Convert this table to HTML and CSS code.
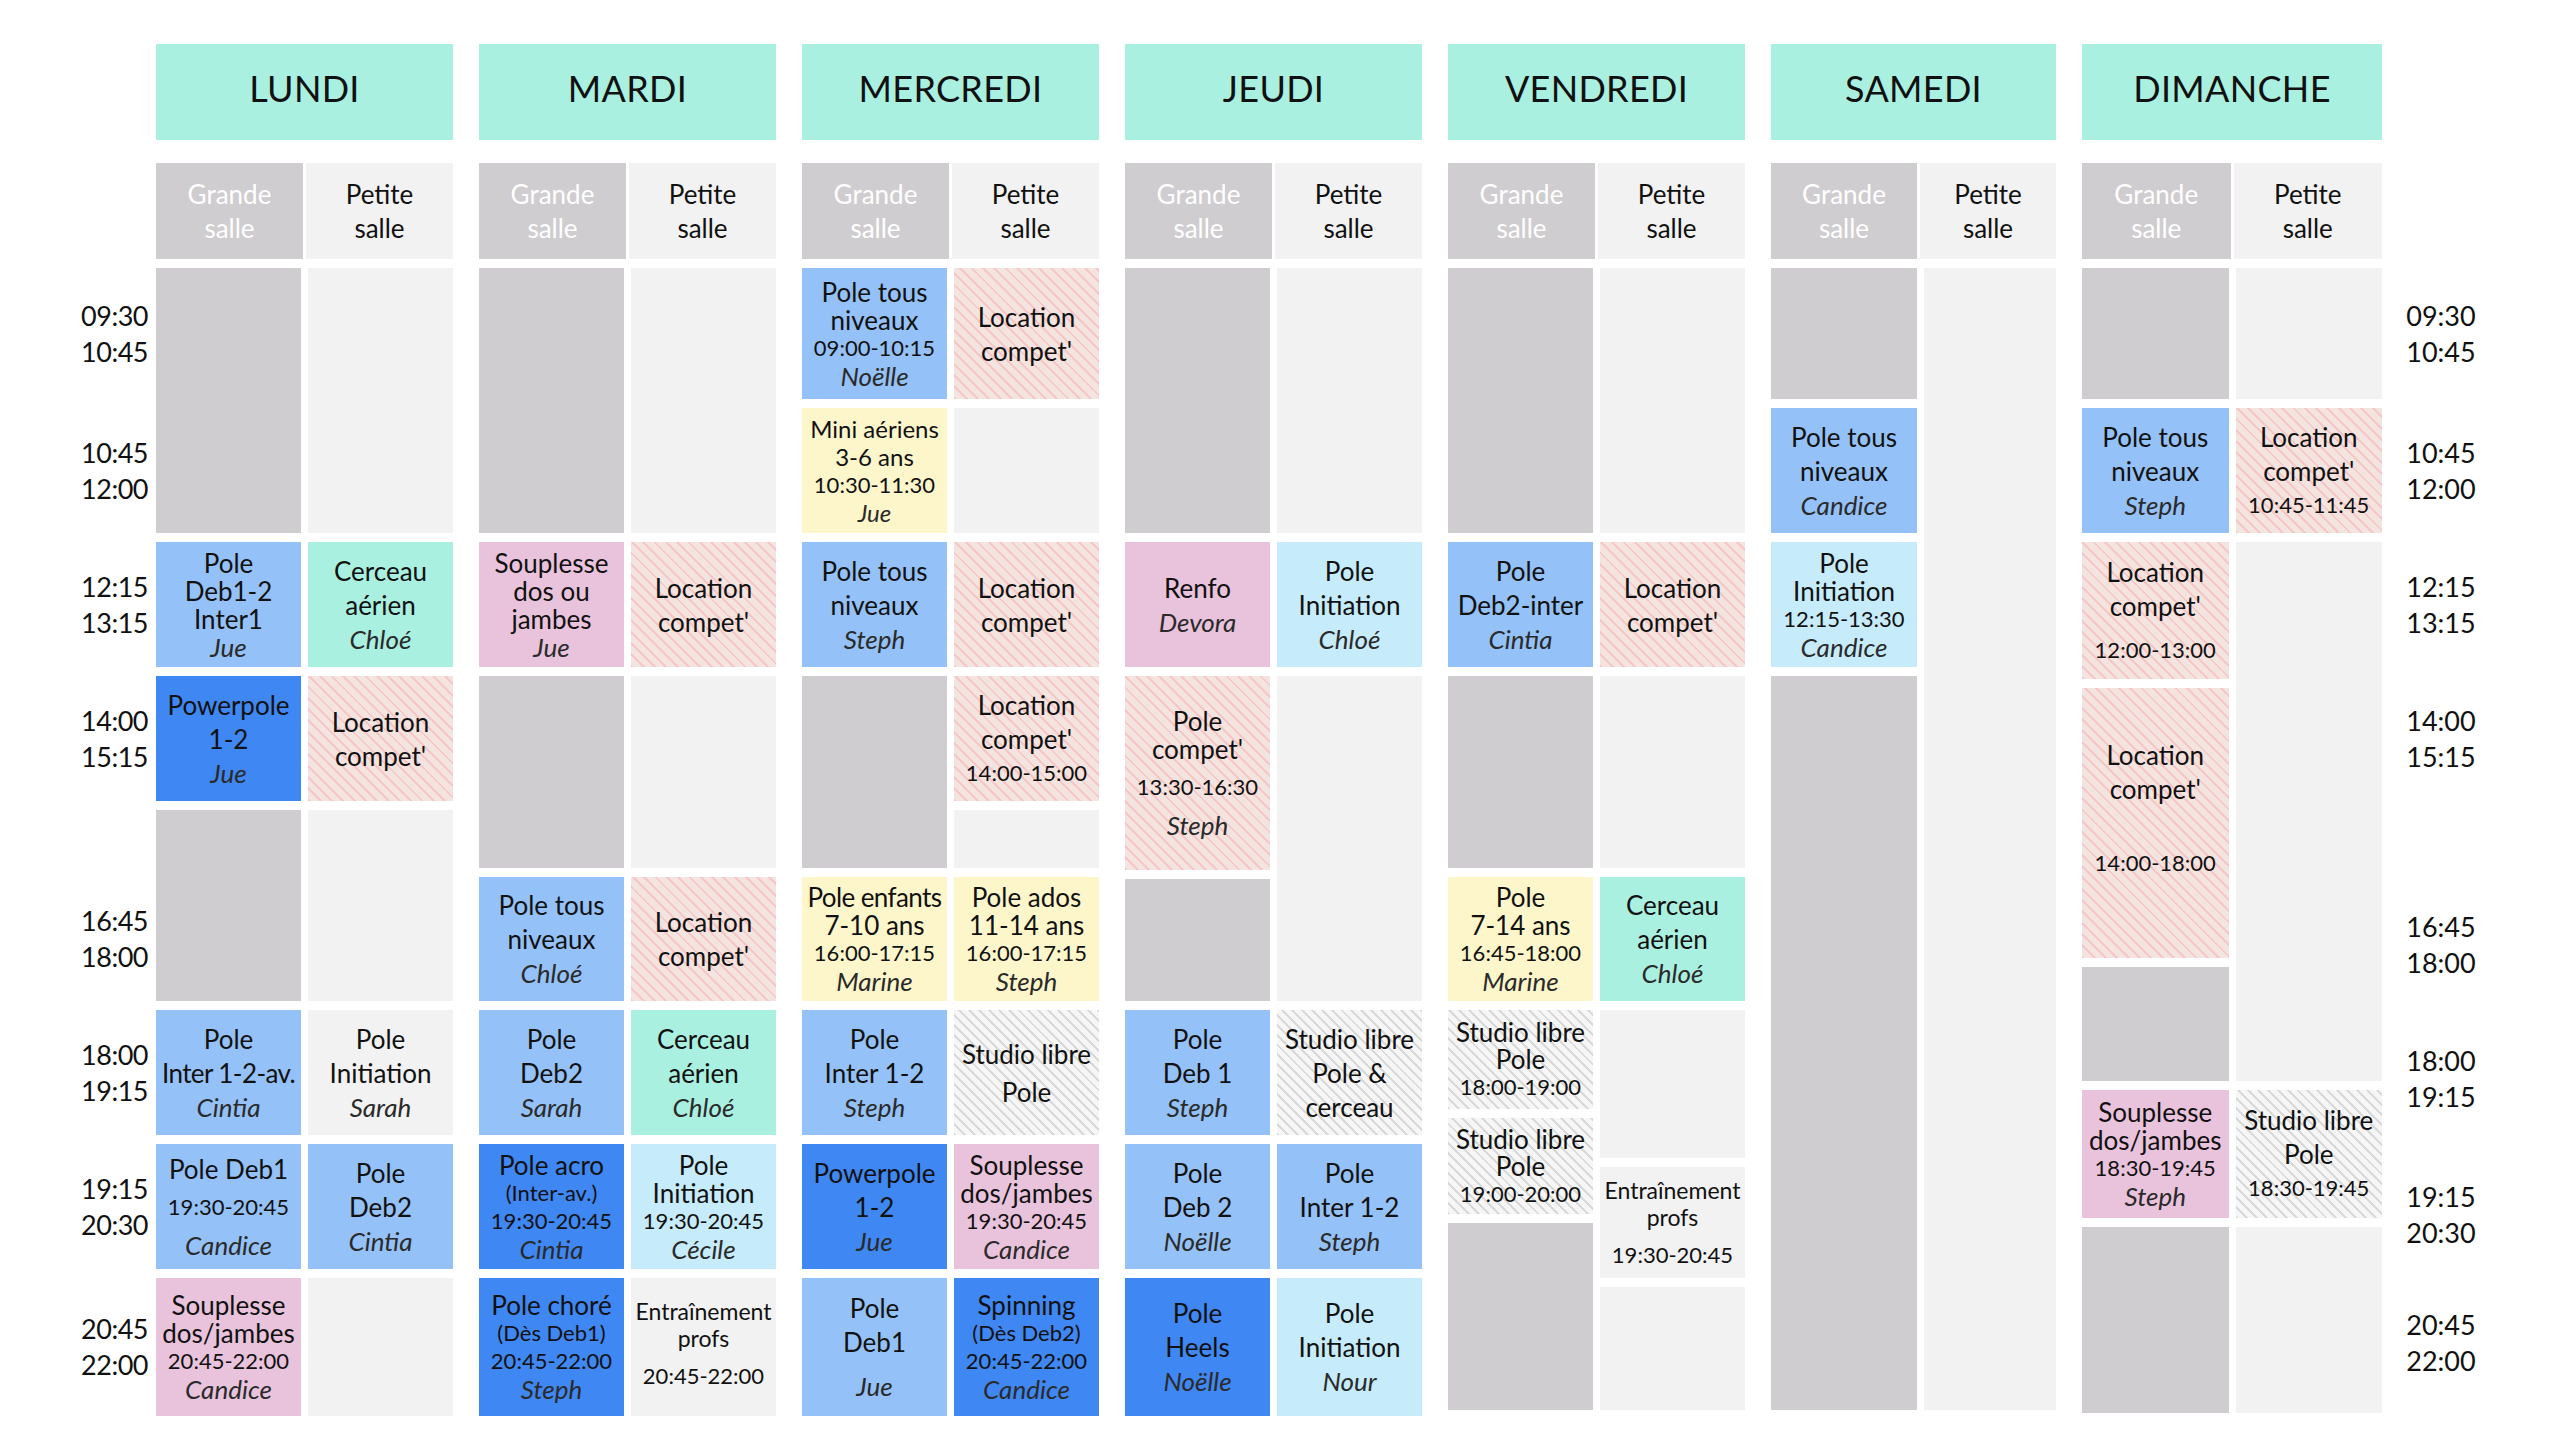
FILE: index.html
```html
<!DOCTYPE html>
<html lang="fr">
<head>
<meta charset="utf-8">
<title>Planning</title>
<link rel="stylesheet" href="styles.css">
</head>
<body>
<div class="page">
  <div class="times left">
    <div class="slot hA"><span>09:30</span><span>10:45</span></div>
    <div class="slot hB"><span>10:45</span><span>12:00</span></div>
    <div class="slot hC"><span>12:15</span><span>13:15</span></div>
    <div class="slot hD"><span>14:00</span><span>15:15</span></div>
    <div class="slot hE"></div>
    <div class="slot hF"><span>16:45</span><span>18:00</span></div>
    <div class="slot hG"><span>18:00</span><span>19:15</span></div>
    <div class="slot hH"><span>19:15</span><span>20:30</span></div>
    <div class="slot hI"><span>20:45</span><span>22:00</span></div>
  </div>

  <div class="days">
    <!-- LUNDI -->
    <div class="day">
      <div class="dayhead">LUNDI</div>
      <div class="rooms"><div class="room big">Grande<br>salle</div><div class="room small">Petite<br>salle</div></div>
      <div class="cols">
        <div class="col">
          <div class="b gy h265"></div>
          <div class="b lb hC tight"><span>Pole</span><span>Deb1-2</span><span>Inter1</span><span class="n">Jue</span></div>
          <div class="b db hD"><span>Powerpole</span><span>1-2</span><span class="n">Jue</span></div>
          <div class="b gy h191"></div>
          <div class="b lb hG"><span>Pole</span><span class="nar">Inter 1-2-av.</span><span class="n">Cintia</span></div>
          <div class="b lb hH loose"><span>Pole Deb1</span><span class="t">19:30-20:45</span><span class="n">Candice</span></div>
          <div class="b pk hI tight"><span>Souplesse</span><span>dos/jambes</span><span class="t">20:45-22:00</span><span class="n">Candice</span></div>
        </div>
        <div class="col">
          <div class="b lg h265"></div>
          <div class="b mt hC"><span>Cerceau</span><span>aérien</span><span class="n">Chloé</span></div>
          <div class="b hp hD"><span>Location</span><span>compet'</span></div>
          <div class="b lg h191"></div>
          <div class="b lg hG"><span>Pole</span><span>Initiation</span><span class="n">Sarah</span></div>
          <div class="b lb hH"><span>Pole</span><span>Deb2</span><span class="n">Cintia</span></div>
          <div class="b lg hI"></div>
        </div>
      </div>
    </div>

    <!-- MARDI -->
    <div class="day">
      <div class="dayhead">MARDI</div>
      <div class="rooms"><div class="room big">Grande<br>salle</div><div class="room small">Petite<br>salle</div></div>
      <div class="cols">
        <div class="col">
          <div class="b gy h265"></div>
          <div class="b pk hC tight"><span>Souplesse</span><span>dos ou</span><span>jambes</span><span class="n">Jue</span></div>
          <div class="b gy h192"></div>
          <div class="b lb hF"><span>Pole tous</span><span>niveaux</span><span class="n">Chloé</span></div>
          <div class="b lb hG"><span>Pole</span><span>Deb2</span><span class="n">Sarah</span></div>
          <div class="b db hH tight"><span>Pole acro</span><span class="s">(Inter-av.)</span><span class="t">19:30-20:45</span><span class="n">Cintia</span></div>
          <div class="b db hI tight"><span>Pole choré</span><span class="s">(Dès Deb1)</span><span class="t">20:45-22:00</span><span class="n">Steph</span></div>
        </div>
        <div class="col">
          <div class="b lg h265"></div>
          <div class="b hp hC"><span>Location</span><span>compet'</span></div>
          <div class="b lg h192"></div>
          <div class="b hp hF"><span>Location</span><span>compet'</span></div>
          <div class="b mt hG"><span>Cerceau</span><span>aérien</span><span class="n">Chloé</span></div>
          <div class="b cy hH tight"><span>Pole</span><span>Initiation</span><span class="t">19:30-20:45</span><span class="n">Cécile</span></div>
          <div class="b lg hI sm lift2"><span>Entraînement</span><span>profs</span><span class="t gap">20:45-22:00</span></div>
        </div>
      </div>
    </div>

    <!-- MERCREDI -->
    <div class="day">
      <div class="dayhead">MERCREDI</div>
      <div class="rooms"><div class="room big">Grande<br>salle</div><div class="room small">Petite<br>salle</div></div>
      <div class="cols">
        <div class="col">
          <div class="b lb hA tight"><span>Pole tous</span><span>niveaux</span><span class="t">09:00-10:15</span><span class="n">Noëlle</span></div>
          <div class="b yw hB tight md"><span>Mini aériens</span><span>3-6 ans</span><span class="t">10:30-11:30</span><span class="n">Jue</span></div>
          <div class="b lb hC"><span>Pole tous</span><span>niveaux</span><span class="n">Steph</span></div>
          <div class="b gy h192"></div>
          <div class="b yw hF tight"><span class="nar">Pole enfants</span><span>7-10 ans</span><span class="t">16:00-17:15</span><span class="n">Marine</span></div>
          <div class="b lb hG"><span>Pole</span><span>Inter 1-2</span><span class="n">Steph</span></div>
          <div class="b db hH"><span>Powerpole</span><span>1-2</span><span class="n">Jue</span></div>
          <div class="b lb hI"><span>Pole</span><span>Deb1</span><span class="n gap">Jue</span></div>
        </div>
        <div class="col">
          <div class="b hp hA"><span>Location</span><span>compet'</span></div>
          <div class="b lg hB"></div>
          <div class="b hp hC"><span>Location</span><span>compet'</span></div>
          <div class="b hp hD"><span>Location</span><span>compet'</span><span class="t">14:00-15:00</span></div>
          <div class="b lg hE"></div>
          <div class="b yw hF tight"><span>Pole ados</span><span>11-14 ans</span><span class="t">16:00-17:15</span><span class="n">Steph</span></div>
          <div class="b hg hG loose"><span>Studio libre</span><span>Pole</span></div>
          <div class="b pk hH tight"><span>Souplesse</span><span>dos/jambes</span><span class="t">19:30-20:45</span><span class="n">Candice</span></div>
          <div class="b db hI tight"><span>Spinning</span><span class="s">(Dès Deb2)</span><span class="t">20:45-22:00</span><span class="n">Candice</span></div>
        </div>
      </div>
    </div>

    <!-- JEUDI -->
    <div class="day">
      <div class="dayhead">JEUDI</div>
      <div class="rooms"><div class="room big">Grande<br>salle</div><div class="room small">Petite<br>salle</div></div>
      <div class="cols">
        <div class="col">
          <div class="b gy h265"></div>
          <div class="b pk hC"><span>Renfo</span><span class="n">Devora</span></div>
          <div class="b hp h194 tight"><span>Pole</span><span>compet'</span><span class="t gap">13:30-16:30</span><span class="n gap">Steph</span></div>
          <div class="b gy h122"></div>
          <div class="b lb hG"><span>Pole</span><span>Deb 1</span><span class="n">Steph</span></div>
          <div class="b lb hH"><span>Pole</span><span>Deb 2</span><span class="n">Noëlle</span></div>
          <div class="b db hI"><span>Pole</span><span>Heels</span><span class="n">Noëlle</span></div>
        </div>
        <div class="col">
          <div class="b lg h265"></div>
          <div class="b cy hC"><span>Pole</span><span>Initiation</span><span class="n">Chloé</span></div>
          <div class="b lg h325"></div>
          <div class="b hg hG"><span>Studio libre</span><span>Pole &amp;</span><span>cerceau</span></div>
          <div class="b lb hH"><span>Pole</span><span>Inter 1-2</span><span class="n">Steph</span></div>
          <div class="b cy hI"><span>Pole</span><span>Initiation</span><span class="n">Nour</span></div>
        </div>
      </div>
    </div>

    <!-- VENDREDI -->
    <div class="day">
      <div class="dayhead">VENDREDI</div>
      <div class="rooms"><div class="room big">Grande<br>salle</div><div class="room small">Petite<br>salle</div></div>
      <div class="cols">
        <div class="col">
          <div class="b gy h265"></div>
          <div class="b lb hC"><span>Pole</span><span>Deb2-inter</span><span class="n">Cintia</span></div>
          <div class="b gy h192"></div>
          <div class="b yw hF tight"><span>Pole</span><span>7-14 ans</span><span class="t">16:45-18:00</span><span class="n">Marine</span></div>
          <div class="b hg h99 xtight"><span>Studio libre</span><span>Pole</span><span class="t">18:00-19:00</span></div>
          <div class="b hg h96 xtight"><span>Studio libre</span><span>Pole</span><span class="t">19:00-20:00</span></div>
          <div class="b gy h187"></div>
        </div>
        <div class="col">
          <div class="b lg h265"></div>
          <div class="b hp hC"><span>Location</span><span>compet'</span></div>
          <div class="b lg h192"></div>
          <div class="b mt hF"><span>Cerceau</span><span>aérien</span><span class="n">Chloé</span></div>
          <div class="b lg h148"></div>
          <div class="b lg h111 sm"><span>Entraînement</span><span>profs</span><span class="t gap">19:30-20:45</span></div>
          <div class="b lg h123"></div>
        </div>
      </div>
    </div>

    <!-- SAMEDI -->
    <div class="day narrow">
      <div class="dayhead">SAMEDI</div>
      <div class="rooms"><div class="room big">Grande<br>salle</div><div class="room small">Petite<br>salle</div></div>
      <div class="cols">
        <div class="col">
          <div class="b gy hA"></div>
          <div class="b lb hB"><span>Pole tous</span><span>niveaux</span><span class="n">Candice</span></div>
          <div class="b cy hC tight"><span>Pole</span><span>Initiation</span><span class="t">12:15-13:30</span><span class="n">Candice</span></div>
          <div class="b gy h734"></div>
        </div>
        <div class="col">
          <div class="b lg h1142"></div>
        </div>
      </div>
    </div>

    <!-- DIMANCHE -->
    <div class="day wide">
      <div class="dayhead">DIMANCHE</div>
      <div class="rooms"><div class="room big">Grande<br>salle</div><div class="room small">Petite<br>salle</div></div>
      <div class="cols">
        <div class="col">
          <div class="b gy hA"></div>
          <div class="b lb hB"><span>Pole tous</span><span>niveaux</span><span class="n">Steph</span></div>
          <div class="b hp h137"><span>Location</span><span>compet'</span><span class="t gap">12:00-13:00</span></div>
          <div class="b hp h270 lift"><span>Location</span><span>compet'</span><span class="t far">14:00-18:00</span></div>
          <div class="b gy h114"></div>
          <div class="b pk h128 tight"><span>Souplesse</span><span>dos/jambes</span><span class="t">18:30-19:45</span><span class="n">Steph</span></div>
          <div class="b gy h186"></div>
        </div>
        <div class="col">
          <div class="b lg hA"></div>
          <div class="b hp hB"><span>Location</span><span>compet'</span><span class="t">10:45-11:45</span></div>
          <div class="b lg h539"></div>
          <div class="b hg h128"><span>Studio libre</span><span>Pole</span><span class="t">18:30-19:45</span></div>
          <div class="b lg h186"></div>
        </div>
      </div>
    </div>
  </div>

  <div class="times right">
    <div class="slot hA"><span>09:30</span><span>10:45</span></div>
    <div class="slot hB"><span>10:45</span><span>12:00</span></div>
    <div class="slot hC"><span>12:15</span><span>13:15</span></div>
    <div class="slot hD"><span>14:00</span><span>15:15</span></div>
    <div class="slot hE"></div>
    <div class="slot hF downF"><span>16:45</span><span>18:00</span></div>
    <div class="slot hG downG"><span>18:00</span><span>19:15</span></div>
    <div class="slot hH downH"><span>19:15</span><span>20:30</span></div>
    <div class="slot hI upI"><span>20:45</span><span>22:00</span></div>
  </div>
</div>
</body>
</html>
```

FILE: styles.css
```css
*, *::before, *::after {
  box-sizing: border-box;
}

html, body {
  margin: 0;
  padding: 0;
  background: #ffffff;
}

body {
  font-family: "Lato", "Liberation Sans", sans-serif;
  color: #111111;
  width: 2560px;
  height: 1450px;
  overflow: hidden;
}

.page {
  display: flex;
  align-items: flex-start;
  padding-top: 44px;
}

/* ---------- time columns ---------- */
.times {
  flex: none;
  display: flex;
  flex-direction: column;
  gap: 9px;
  padding-top: 224px;
  font-size: 27px;
  line-height: 36px;
}

.times.left {
  width: 156px;
  padding-right: 8px;
  text-align: right;
  letter-spacing: -0.5px;
}

.times.right {
  width: 118px;
  text-align: center;
}

.slot {
  display: flex;
  flex-direction: column;
  justify-content: center;
}

.slot span { display: block; }

.slot.downF { padding-top: 12px; }
.slot.downG { padding-top: 13px; }
.slot.downH { padding-top: 17px; }
.slot.upI { padding-bottom: 8px; }

/* ---------- days ---------- */
.days {
  flex: none;
  display: flex;
  gap: 26px;
}

.day {
  flex: none;
  width: 297px;
  display: flex;
  flex-direction: column;
}

.day.narrow { width: 285px; }
.day.wide { width: 300px; }

.dayhead {
  height: 96px;
  padding-bottom: 8px;
  background: #aaf0e0;
  display: flex;
  align-items: center;
  justify-content: center;
  font-size: 36px;
  letter-spacing: 0.3px;
}

.rooms {
  margin-top: 23px;
  height: 96px;
  display: grid;
  grid-template-columns: minmax(0, 1fr) minmax(0, 1fr);
  gap: 3px;
}

.narrow .rooms { grid-template-columns: 146px minmax(0, 1fr); }

.room {
  display: flex;
  align-items: center;
  justify-content: center;
  text-align: center;
  font-size: 26px;
  line-height: 34px;
}

.room.big {
  background: #cfcdcf;
  color: #ffffff;
}

.room.small {
  background: #f2f2f2;
  color: #111111;
}

.cols {
  margin-top: 9px;
  display: grid;
  grid-template-columns: minmax(0, 1fr) minmax(0, 1fr);
  column-gap: 7px;
}

.narrow .cols { grid-template-columns: 146px minmax(0, 1fr); }

.col {
  display: flex;
  flex-direction: column;
  gap: 9px;
  min-width: 0;
}

/* ---------- blocks ---------- */
.b {
  display: flex;
  flex-direction: column;
  justify-content: center;
  align-items: center;
  text-align: center;
  font-size: 26px;
  line-height: 34px;
  overflow: hidden;
  white-space: nowrap;
}

.b span { display: block; }

.b.tight { line-height: 28px; }
.b.xtight { line-height: 27px; }
.b.loose { line-height: 38px; }
.b.sm { font-size: 23px; line-height: 27px; }
.b.md { font-size: 24px; }
.b.lift { padding-bottom: 28px; }
.b.lift2 { padding-bottom: 8px; }

.b .n { font-style: italic; color: #2a2a2a; }
.b .t { font-size: 22px; }
.b .s { font-size: 22px; }
.b .nar { letter-spacing: -0.6px; }
.b .gap { margin-top: 10px; }
.b .far { margin-top: 40px; }

/* colours */
.gy { background: #cfcdcf; }
.lg { background: #f2f2f2; }
.lb { background: #94c1f7; }
.db { background: #3f87f2; }
.cy { background: #c6ebfa; }
.pk { background: #e9c3dc; }
.yw { background: #fdf6cb; }
.mt { background: #aaf0e0; }

.hp {
  background: repeating-linear-gradient(45deg, #f7c7c7 0 2px, #f4e4e0 2px 8px);
}

.hg {
  background: repeating-linear-gradient(45deg, #d9d9d9 0 2px, #f6f6f6 2px 7px);
}

/* ---------- heights (durations) ---------- */
.hA { height: 131px; }
.hB { height: 125px; }
.hC { height: 125px; }
.hD { height: 125px; }
.hE { height: 58px; }
.hF { height: 124px; }
.hG { height: 125px; }
.hH { height: 125px; }
.hI { height: 138px; }

.h96 { height: 96px; }
.h99 { height: 99px; }
.h111 { height: 111px; }
.h114 { height: 114px; }
.h122 { height: 122px; }
.h123 { height: 123px; }
.h128 { height: 128px; }
.h137 { height: 137px; }
.h148 { height: 148px; }
.h186 { height: 186px; }
.h187 { height: 187px; }
.h191 { height: 191px; }
.h192 { height: 192px; }
.h194 { height: 194px; }
.h265 { height: 265px; }
.h270 { height: 270px; }
.h325 { height: 325px; }
.h539 { height: 539px; }
.h734 { height: 734px; }
.h1142 { height: 1142px; }
```
